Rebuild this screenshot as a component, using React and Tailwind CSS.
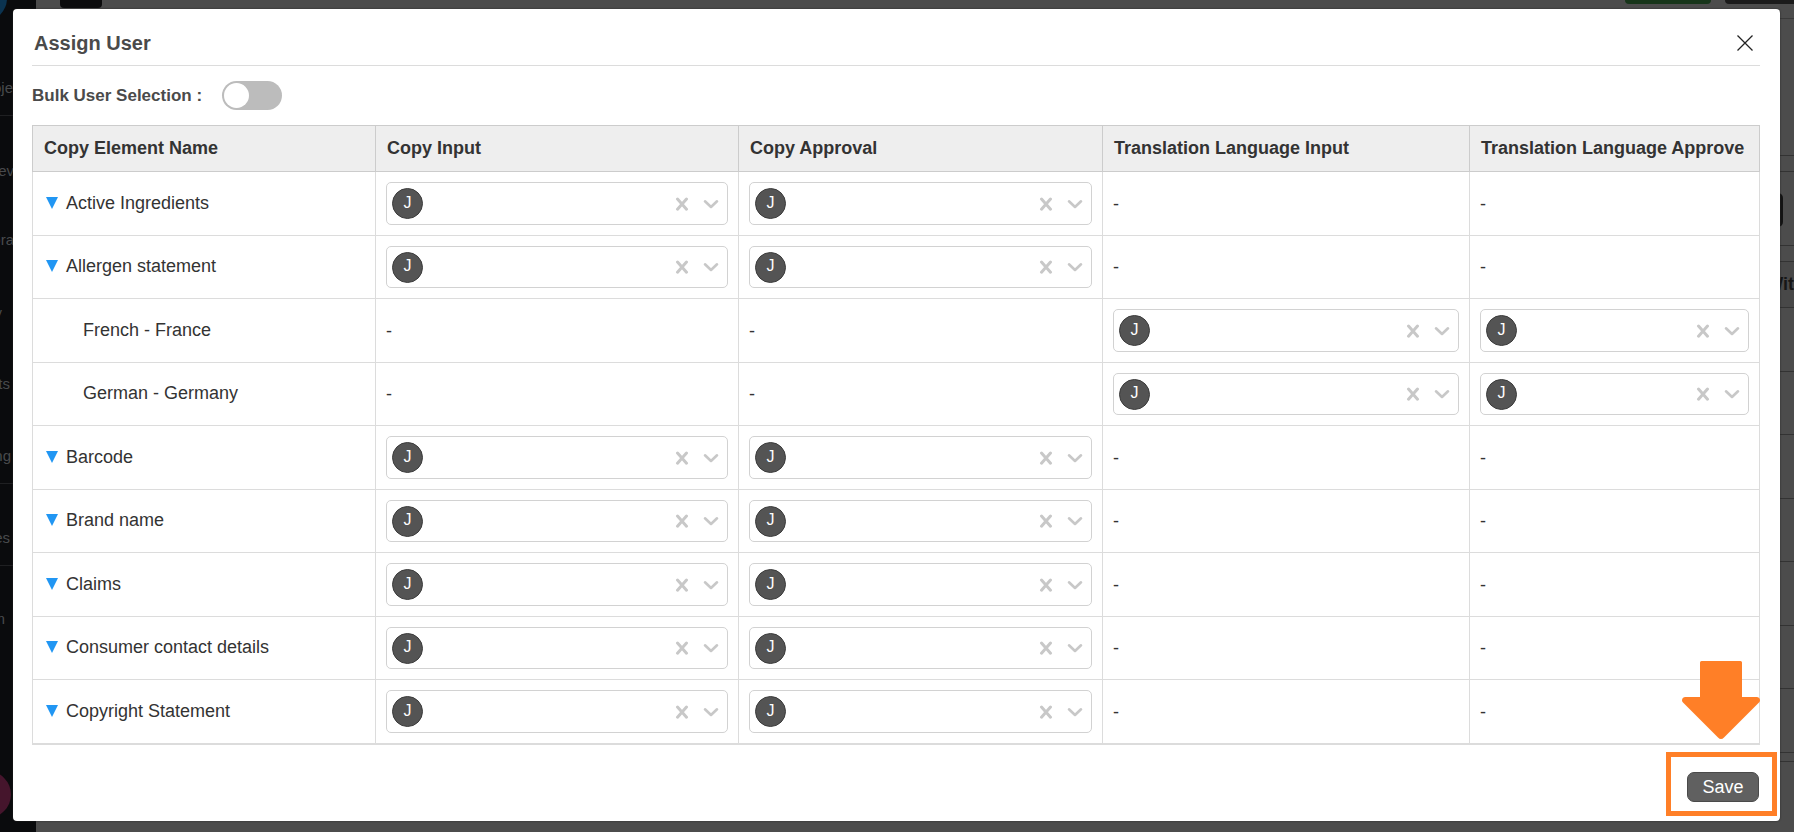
const SIDE_ITEMS = [
  { text: 'oje', height: 'h-[97px]' },
  { text: '', height: 'h-[19px]', rule: true },
  { text: 'iev', height: 'h-16', align: 'pr-[22px]' },
  { text: 'ora', height: 'h-[69px]', align: 'pr-[22px]' },
  { text: 'y', height: 'h-[73px]', align: 'pr-[34px]' },
  { text: 'ts', height: 'h-[71px]', align: 'pr-[26px]' },
  { text: 'ng', height: 'h-[72px]', align: 'pr-[25px]' },
  { text: '', height: 'h-[19px]', rule: true },
  { text: 'es', height: 'h-[63px]', align: 'pr-[26px]' },
  { text: '', height: 'h-[19px]', rule: true },
  { text: 'm', height: 'h-[62px]', align: 'pr-[31px]' },
];

const BACK_ROWS = ['h-16', 'h-[63px]', 'h-16', 'h-[63px]', 'h-16', 'h-[63px]', 'h-16', 'h-[9px]'];

const ROWS = [
  { name: 'Active Ingredients' },
  { name: 'Allergen statement' },
  { name: 'French - France', child: true },
  { name: 'German - Germany', child: true },
  { name: 'Barcode' },
  { name: 'Brand name' },
  { name: 'Claims' },
  { name: 'Consumer contact details' },
  { name: 'Copyright Statement' },
];

const COLUMNS = [
  'Copy Element Name',
  'Copy Input',
  'Copy Approval',
  'Translation Language Input',
  'Translation Language Approve',
];

function Sidebar() {
  return (
    <nav className="relative flex w-9 shrink-0 flex-col overflow-hidden bg-[#0a0b0d] text-[15px] leading-[18px] text-[#484a4c]">
      {SIDE_ITEMS.map((item, i) => (
        <div
          key={i}
          className={`flex shrink-0 items-end justify-end ${item.height} ${item.align || 'pr-[23px]'} ${item.rule ? 'border-b border-[#1f2022]' : ''}`}
        >
          {item.text}
        </div>
      ))}
      <span className="absolute -top-6 -left-[38px] size-[45px] rounded-full bg-[#0b3350]" />
      <span className="absolute bottom-[14px] -left-9 size-[47px] rounded-full bg-[#45152c]" />
    </nav>
  );
}

function Backdrop() {
  return (
    <main className="relative flex min-w-0 flex-1 flex-col overflow-hidden">
      <div className="flex h-[19px] shrink-0 items-start border-b border-[#3a3a3a] pl-6">
        <span className="h-2 w-[42px] rounded-b-[4px] bg-[#0c0c0d]" />
        <span className="ml-auto h-1 w-[86px] rounded-b-[5px] bg-[#17351a]" />
        <span className="ml-[14px] h-1 w-[69px] rounded-bl-[5px] bg-[#1b1b1b]" />
      </div>
      <div className="h-[137px] shrink-0 border-b border-[#333]" />
      <div className="h-4 shrink-0 border-b border-[#333]" />
      <div className="flex h-[74px] shrink-0 items-center justify-end border-b border-[#333] pt-[2px] pr-[11px]">
        <span className="h-[34px] w-24 rounded-[5px] bg-[#141414]" />
      </div>
      <div className="h-4 shrink-0 border-b border-[#333]" />
      <div className="flex h-[46px] shrink-0 items-center justify-end border-b border-[#333] bg-[#484848] pb-[2px] text-[18px] font-bold text-[#161616]">
        Wit
      </div>
      {BACK_ROWS.map((height, i) => (
        <div key={i} className={`shrink-0 border-b border-[#333] ${height}`} />
      ))}
    </main>
  );
}

function UserPicker({ label }) {
  return (
    <div
      role="group"
      aria-label={label}
      className="flex h-[43px] items-center rounded-[5px] border border-[#d2d2d2] bg-white pr-px pl-[5px] group-even:h-[42px]"
    >
      <span className="flex size-[31px] items-center justify-center rounded-full border border-[#3c3c3c] bg-[#545454] pb-[2px] text-[16px] leading-5 text-white">
        J
      </span>
      <button type="button" aria-label="Clear" className="ml-auto flex size-7 items-center justify-center text-[#c8c8c8]">
        <svg viewBox="0 0 14 14" className="size-[14px]" fill="none" stroke="currentColor" strokeWidth="3" strokeLinecap="round">
          <path d="M2.500 2l9 10.200M11.500 2l-9 10.200" />
        </svg>
      </button>
      <button type="button" aria-label="Open" className="flex h-7 w-[30px] items-center justify-center text-[#c8c8c8]">
        <svg viewBox="0 0 16 10" className="h-[10px] w-4" fill="none" stroke="currentColor" strokeWidth="2.6" strokeLinecap="round" strokeLinejoin="round">
          <path d="M2 2.300L8 8l6-5.700" />
        </svg>
      </button>
    </div>
  );
}

function Row({ row }) {
  return (
    <tr className="group h-16 text-[#333] even:h-[63px]">
      <td className="border border-[#dcdcdc] pb-[2px]">
        {row.child ? (
          <span className="block pl-[50px]">{row.name}</span>
        ) : (
          <span className="flex items-center gap-2 pl-[13px]">
            <svg viewBox="0 0 12 12" className="size-3" aria-hidden="true">
              <path d="M0 0h12L6 12z" fill="#2196f3" />
            </svg>
            {row.name}
          </span>
        )}
      </td>
      {COLUMNS.slice(1).map((column, i) => {
        const active = row.child ? i >= 2 : i < 2;
        return (
          <td key={column} className="border border-[#dcdcdc] px-[10px] py-[10px]">
            {active ? <UserPicker label={`${row.name}: ${column}`} /> : '-'}
          </td>
        );
      })}
    </tr>
  );
}

export default function App() {
  return (
    <div className="relative flex min-h-screen bg-[#4c4c4c] font-['Liberation_Sans',Arial,sans-serif] text-[18px] leading-6">
      <Sidebar />
      <Backdrop />
      <div className="absolute inset-0 flex pt-[9px] pr-[14px] pb-[11px] pl-[13px]">
        <section
          role="dialog"
          aria-labelledby="title"
          className="flex min-w-0 flex-1 flex-col rounded-[4px] bg-white pr-5 pl-[19px] shadow-[0_0_2px_#222]"
        >
          <header className="flex h-[57px] shrink-0 items-center justify-between border-b border-[#dcdcdc] pt-3 pr-[7px] pl-[2px]">
            <h1 id="title" className="text-[20px] font-bold text-[#4a4a4a]">Assign User</h1>
            <button type="button" aria-label="Close" className="flex size-4 items-center justify-center">
              <svg viewBox="0 0 16 16" className="size-4" fill="none" stroke="#222" strokeWidth="1.3">
                <path d="M.5.5l15 15M15.500.5l-15 15" />
              </svg>
            </button>
          </header>
          <label className="flex h-[59px] shrink-0 items-center gap-5 self-start text-[17px] font-bold text-[#4a4a4a]">
            Bulk User Selection :
            <input
              type="checkbox"
              role="switch"
              className="flex h-[29px] w-[60px] appearance-none items-center rounded-full bg-[#bcbcbc] px-[2px] before:size-[25px] before:rounded-full before:bg-white before:content-[''] checked:justify-end checked:bg-[#2196f3]"
            />
          </label>
          <table className="w-full table-fixed border-collapse shadow-[0_1px_0_#dcdcdc]">
            <colgroup>
              <col className="w-[343px]" />
              <col className="w-[363px]" />
              <col className="w-[364px]" />
              <col className="w-[367px]" />
              <col className="w-[290px]" />
            </colgroup>
            <thead>
              <tr className="h-[46px] bg-[#eee]">
                {COLUMNS.map((c) => (
                  <th key={c} scope="col" className="border border-[#ccc] pr-2 pb-[2px] pl-[11px] text-left font-bold whitespace-nowrap text-[#333]">
                    {c}
                  </th>
                ))}
              </tr>
            </thead>
            <tbody>
              {ROWS.map((row) => (
                <Row key={row.name} row={row} />
              ))}
            </tbody>
          </table>
          <footer className="flex justify-end pt-[28px] pr-px">
            <div className="relative">
              <button type="button" className="block h-[30px] w-[72px] rounded-[7px] border border-[#4a4a4a] bg-[#606060] leading-7 text-white">
                Save
              </button>
              <span className="pointer-events-none absolute -top-5 -right-[18px] -bottom-[14px] -left-[21px] border-[5px] border-[#ff7f27]" />
              <svg viewBox="0 0 78 78" className="pointer-events-none absolute -top-[111px] -right-px size-[78px]" aria-hidden="true">
                <path
                  d="M19.500 0h39q1.500 0 1.500 1.500V36h14.500q3.500 0 3.500 3.500 0 1-1 2L42 76.500q-3 3-6 0L1 41.500q-1-1-1-2Q0 36 3.500 36H18V1.500Q18 0 19.500 0z"
                  fill="#ff7f27"
                />
              </svg>
            </div>
          </footer>
        </section>
      </div>
    </div>
  );
}
